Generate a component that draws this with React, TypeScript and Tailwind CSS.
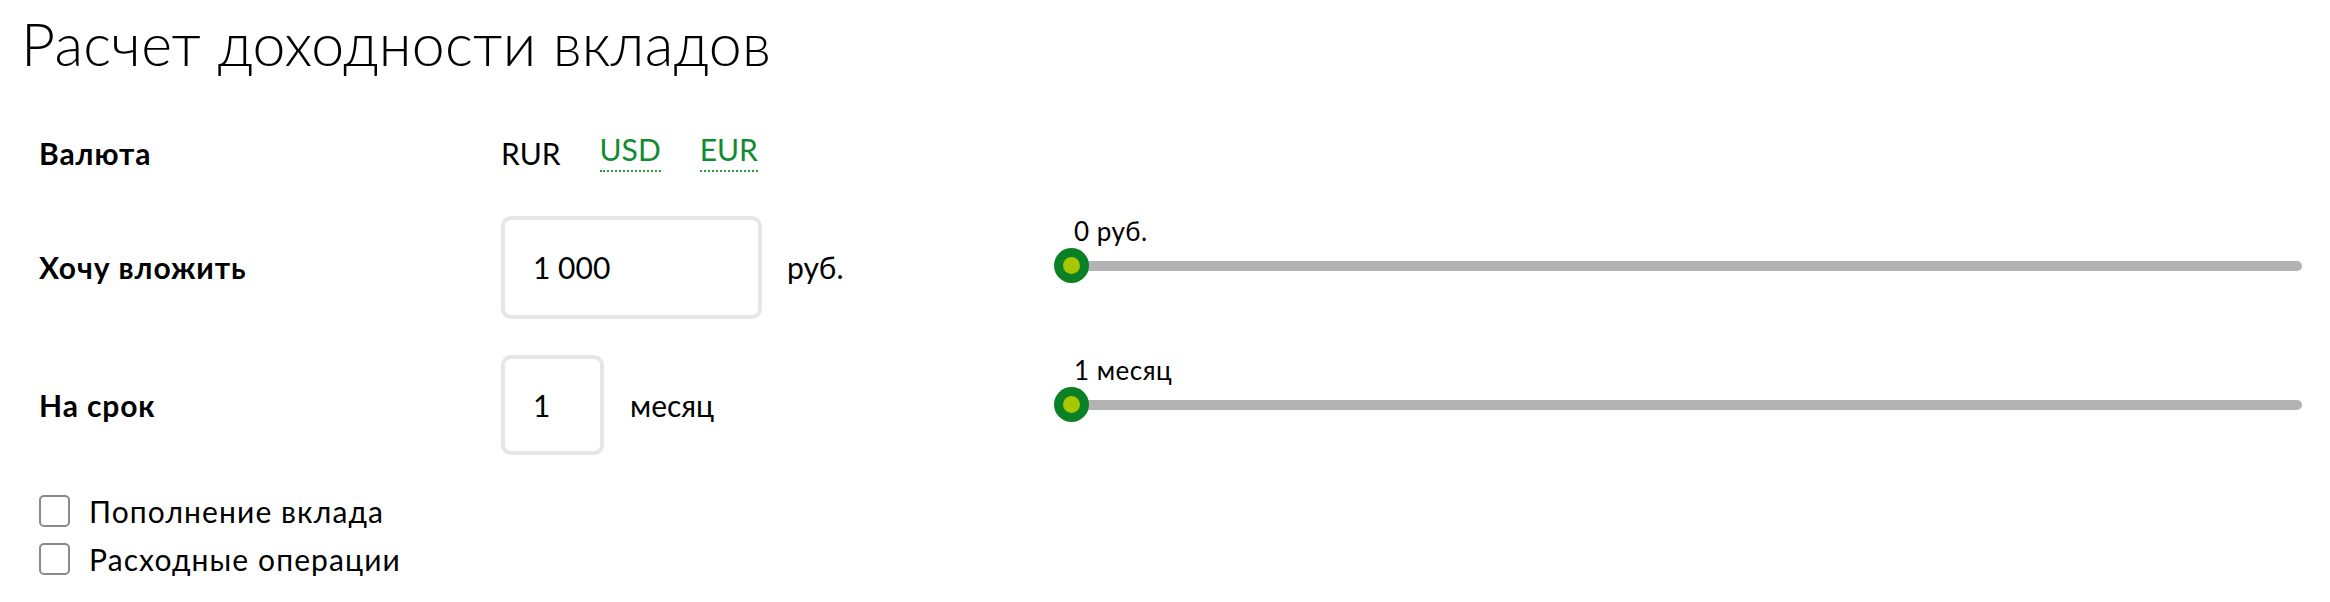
import React from "react";

const font = { fontFamily: "Lato, 'Noto Sans', sans-serif" };

function Slider({ label }: { label: string }) {
  return (
    <div className="self-start flex flex-col">
      <div className="pl-[4px] text-[26px] leading-[30px] tracking-[0.5px]">{label}</div>
      <div className="relative h-[39px] flex items-center">
        <div className="h-[10px] w-full rounded-full bg-[#b2b2b2]" />
        <div className="absolute left-[-16px] top-[2px] flex h-[35px] w-[35px] items-center justify-center rounded-full bg-[#0b8126]">
          <div className="h-[17px] w-[17px] rounded-full bg-[#a7c700]" />
        </div>
      </div>
    </div>
  );
}

function Check({ label }: { label: string }) {
  return (
    <label className="flex items-center gap-[19px]">
      <span className="h-[32px] w-[31px] rounded-[5px] border-2 border-[#8a8a8a] bg-white" />
      <span className="text-[30px] leading-[32px] tracking-[1.1px]">{label}</span>
    </label>
  );
}

export default function App() {
  return (
    <div className="min-h-screen bg-white text-black" style={font}>
      <h1 className="pl-[21px] pt-[9px] text-[59px] font-light leading-[70px] tracking-[0.3px]">
        Расчет доходности вкладов
      </h1>

      <div className="mt-[41px] pl-[39px] pr-[28px]">
        <div className="grid h-[66px] grid-cols-[462px_569px_1fr] items-center">
          <div className="text-[30px] font-bold tracking-[0.9px]">Валюта</div>
          <div className="flex items-center gap-[39px] text-[30px] leading-[30px]">
            <span>RUR</span>
            <span className="border-b-2 border-dotted border-[#2a9a3e] pb-[6px] text-[#118a31]">USD</span>
            <span className="border-b-2 border-dotted border-[#2a9a3e] pb-[6px] text-[#118a31]">EUR</span>
          </div>
          <div />
        </div>

        <div className="mt-[30px] grid h-[103px] grid-cols-[462px_569px_1fr] items-center">
          <div className="text-[30px] font-bold tracking-[0.9px]">Хочу вложить</div>
          <div className="flex items-center gap-[25px]">
            <div className="flex h-[103px] w-[261px] items-center rounded-[10px] border-4 border-[#e6e6e6] pl-[28px] text-[30px]">
              1 000
            </div>
            <span className="text-[30px]">руб.</span>
          </div>
          <Slider label="0 руб." />
        </div>

        <div className="mt-[36px] grid h-[100px] grid-cols-[462px_569px_1fr] items-center">
          <div className="text-[30px] font-bold tracking-[0.9px]">На срок</div>
          <div className="flex items-center gap-[26px]">
            <div className="flex h-[100px] w-[103px] items-center rounded-[10px] border-4 border-[#e6e6e6] pl-[28px] text-[30px]">
              1
            </div>
            <span className="text-[30px]">месяц</span>
          </div>
          <Slider label="1 месяц" />
        </div>

        <div className="mt-[40px] flex flex-col gap-[16px]">
          <Check label="Пополнение вклада" />
          <Check label="Расходные операции" />
        </div>
      </div>
    </div>
  );
}
